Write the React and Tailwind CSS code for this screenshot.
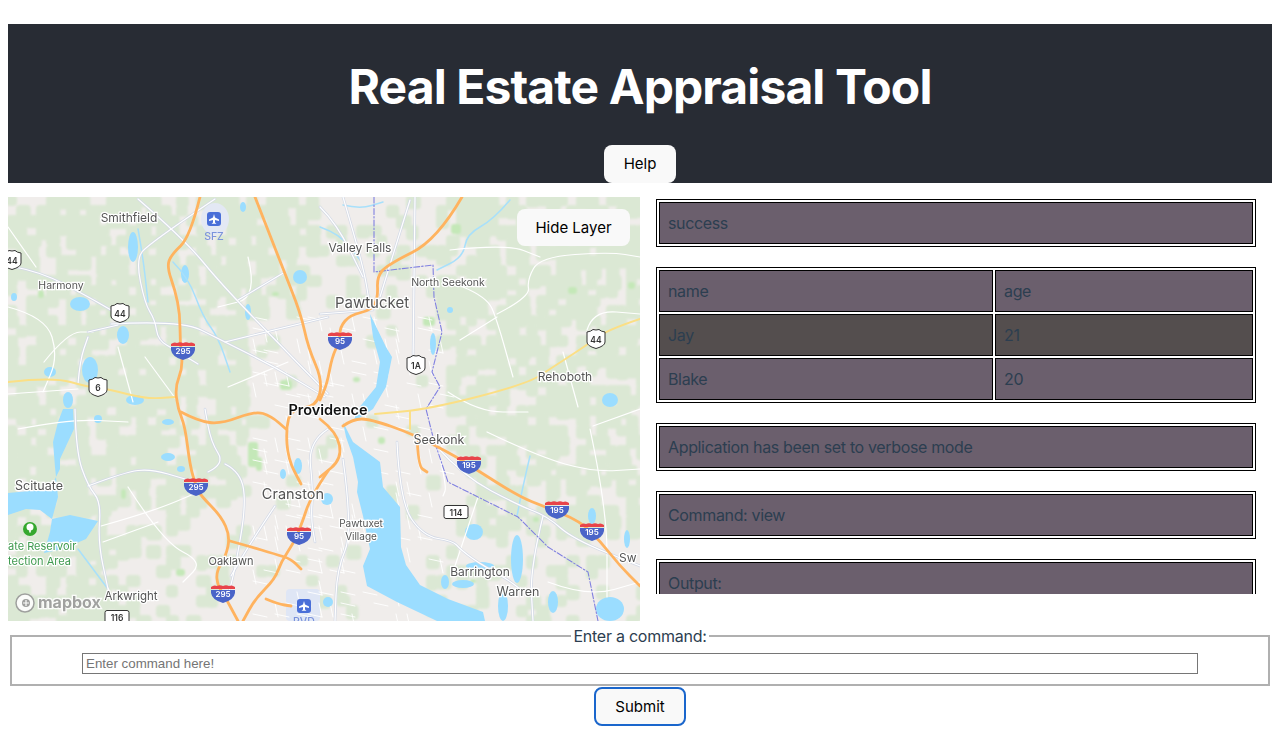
const ROWS = [['name', 'age'], ['Jay', '21'], ['Blake', '20']];
const MESSAGES_AFTER = ['Application has been set to verbose mode', 'Command: view', 'Output:'];

// deterministic noise so the map texture is the same on every render
const noise = (x, y, k = 1) => {
  const n = Math.sin(x * 12.9898 * k + y * 78.233) * 43758.5453;
  return n - Math.floor(n);
};

function greenChance(x, y) {
  if (x > 235 && x < 440 && y > 110) return 0.07;
  if (x > 300 && x < 430) return 0.18;
  if (x > 430 && y > 330) return 0.22;
  if (x > 430) return y > 240 ? 0.55 : 0.72;
  if (y > 300 && x > 90) return 0.3;
  if (y > 270 && x > 90) return 0.42;
  return 0.68;
}

function buildPatches() {
  const cells = [];
  for (let x = 0; x < 632; x += 10) {
    for (let y = 0; y < 424; y += 10) {
      if (noise(x, y) < greenChance(x, y)) {
        cells.push({ x: x - 2, y: y - 2, w: 11 + noise(x, y, 5) * 5, h: 11 + noise(x, y, 7) * 5 });
      }
    }
  }
  return cells;
}

// thin street grid of the urban core
function buildStreets() {
  const streets = [];
  for (let x = 245; x < 440; x += 11) {
    for (let y = 120; y < 420; y += 11) {
      const n = noise(x, y, 2);
      if (n < 0.4) {
        const horizontal = n < 0.2;
        streets.push({ x1: x, y1: y, x2: horizontal ? x + 14 : x + 3, y2: horizontal ? y + 3 : y + 14 });
      }
    }
  }
  return streets;
}

// rounds a polyline's corners so roads run as curves
function smoothPath(points) {
  const p = points.split(' ').map((s) => s.split(',').map(Number));
  if (p.length < 3) return `M${p[0]} L${p[1]}`;
  let d = `M${p[0][0]} ${p[0][1]}`;
  for (let i = 1; i < p.length - 1; i++) {
    const mx = (p[i][0] + p[i + 1][0]) / 2;
    const my = (p[i][1] + p[i + 1][1]) / 2;
    d += ` Q${p[i][0]} ${p[i][1]} ${mx} ${my}`;
  }
  const last = p[p.length - 1];
  return `${d} L${last[0]} ${last[1]}`;
}

const PATCHES = buildPatches();
const STREETS = buildStreets();

const BRIGHT_GREENS = [
  [102, 112, 8, 10], [30, 93, 6, 8], [272, 183, 12, 10], [443, 27, 10, 10], [415, 120, 12, 9], [560, 90, 9, 7],
  [248, 260, 6, 14], [113, 292, 5, 10], [168, 372, 9, 7], [264, 95, 7, 4], [405, 165, 8, 9], [620, 85, 7, 7], [345, 180, 7, 5],
  [525, 320, 6, 5], [462, 382, 6, 4], [370, 240, 7, 7], [240, 245, 10, 25],
];

const LAKES = [
  [125, 50, 5, 15], [177, 77, 4, 9], [72, 107, 10, 7], [115, 138, 6, 9], [82, 173, 8, 13], [42, 175, 6, 5], [60, 203, 5, 8],
  [127, 203, 9, 5], [292, 80, 7, 7], [240, 115, 3, 8], [602, 203, 8, 7], [442, 113, 3, 3], [425, 147, 3, 11],
  [160, 260, 7, 4], [173, 272, 4, 3], [90, 222, 4, 4], [160, 225, 6, 3], [290, 269, 4, 8], [275, 277, 3, 5], [466, 335, 9, 8],
  [509, 362, 6, 24], [495, 409, 5, 15], [602, 412, 14, 12], [584, 319, 4, 8], [320, 405, 5, 5], [472, 369, 14, 4], [455, 387, 11, 4],
  [437, 385, 4, 7], [319, 302, 6, 6], [619, 342, 3, 9], [545, 405, 5, 11], [6, 100, 3, 4], [235, 10, 3, 5],
];

const WATER = [
  '335,225 345,245 372,265 375,290 392,310 393,350 398,368 412,388 440,402 475,415 477,424 429,424 389,405 359,389 355,369 362,352 355,319 349,295 350,285 345,260 338,240',
  '55,212 65,212 66,232 52,262 52,272 42,292 0,296 0,318 18,312 32,313 44,322 62,318 90,324 78,342 55,352 36,356 42,335 44,322 50,300 47,270 45,245 50,225',
  '362,117 378,150 384,160 378,190 365,212 345,225 350,212 368,190 372,165 365,140',
];

const RIVERS = [
  '502,3 485,23 459,37 455,60 429,73', '312,30 332,37 352,63', '522,259 515,289 509,319', '70,352 100,392', '335,8 352,12 375,5',
  '165,65 180,80 195,120 210,140 222,175', '130,32 135,60 140,105',
];

const MAJOR_ROADS = [
  '130,2 177,43 213,87 277,153 320,197', '207,2 140,47 128,63 137,107 147,123 150,143 167,153 190,167',
  '103,127 173,123 213,143 267,170 317,200', '7,70 33,75 77,98 103,113', '80,135 110,128', '70,187 72,163 80,140',
  '217,145 320,120', '230,103 277,75', '67,212 68,255 80,289 93,305 90,345 100,392', '80,289 117,275 143,272 177,282',
  '200,275 217,267 203,245 197,212', '217,267 233,275 238,309 227,372 220,399', '267,309 243,345 223,379', '320,232 300,245 305,292 303,322 307,345',
  '335,262 345,335 329,372 327,424', '389,245 392,305 415,339 445,344 452,352 469,365 499,382 512,392', '429,250 455,279 512,309 539,319 565,342 632,369',
  '535,319 522,372 525,424', '407,0 405,167', '335,0 355,67 362,110', '402,3 372,100', '312,117 365,113', '312,10 329,27 355,80',
];

const MINOR_ROADS = [
  '489,117 522,100 519,83 532,60 602,55 632,60', '579,133 585,113 632,117', '455,90 479,100 489,123 505,180', '452,143 489,120',
  '442,53 499,47 532,60', '479,235 529,259 585,275 632,272', '582,232 599,312 599,400', '585,229 632,212', '93,329 143,315 193,294',
  '429,249 439,289 435,299', '0,30 28,70', '0,110 38,120 50,160 35,195', '0,197 70,192', '36,165 60,135 85,135', '137,160 170,205',
  '110,150 125,205', '220,190 280,165', '240,60 250,100 210,110', '440,195 470,215 520,215', '555,155 570,210', '10,232 60,222 120,225',
  '120,290 155,345 195,365 175,385', '95,345 150,325', '470,300 445,375', '540,385 580,400 632,385',
];

const INTERSTATES = [
  '192,0 182,40 163,58 159,70 167,93 172,117 172,145 175,170 167,190 170,212 177,229 182,269 188,289 193,299 213,319 222,339 218,359 208,375 210,389 215,396 230,424',
  '454,0 429,43 379,68 369,80 370,100 364,113 342,118 332,130 332,143 324,160 319,187 312,203',
  '247,0 273,67 293,117 300,150 315,185 308,210 283,212 278,232 280,262 293,287',
  '173,215 190,224 213,227 247,214 263,219 278,232', '320,274 303,299 293,329 285,347 273,365 267,382 247,402 235,424',
  '222,344 240,349 267,357 283,362 293,372', '258,402 270,407 283,409', '312,222 329,235 334,262 312,280',
  '335,229 345,222 362,222 405,237 449,260 472,275 512,300 535,309 572,324 592,344 612,369 632,389', '409,237 410,269 419,275',
];

const STATE_LINES = ['366,0 366,75 425,68 426,100 434,135 424,175 432,190 418,212 425,240 440,285 510,320 540,350 580,375 590,424'];

const YELLOW_ROADS = ['0,185 45,180 80,190 100,192 138,202 167,200', '632,122 599,133 579,148 545,170 519,187 422,212 367,217', '402,214 402,232'];

const LABELS = [
  ['Smithfield', 121, 25, 12], ['Valley Falls', 352, 55, 12], ['Harmony', 53, 92, 10.5], ['Pawtucket', 364, 111, 15], ['North Seekonk', 440, 89, 10.5],
  ['Rehoboth', 557, 184, 12], ['Seekonk', 431, 247, 12.5], ['Cranston', 285, 302, 14.5], ['Scituate', 31, 293, 12.5], ['Oaklawn', 223, 368, 11],
  ['Arkwright', 123, 403, 11.5], ['Pawtuxet', 353, 330, 10], ['Village', 353, 343, 10], ['Barrington', 472, 379, 12], ['Warren', 510, 399, 12.5],
];

const INTERSTATE_SHIELDS = [[175, 153, '295'], [188, 289, '295'], [215, 396, '295'], [332, 143, '95'], [291, 338, '95'], [461, 267, '195'], [549, 312, '195'], [584, 334, '195']];
const US_SHIELDS = [[112, 116, '44'], [4, 63, '44'], [90, 190, '6'], [408, 168, '1A'], [588, 142, '44']];
const ROUTE_SIGNS = [[109, 420, '116'], [448, 315, '114']];

function InterstateShield({ x, y, label }) {
  return (
    <g transform={`translate(${x} ${y})`}>
      <path d="M-12 -6 Q-9 -8.5 -6 -7 Q-3 -8.5 0 -7 Q3 -8.5 6 -7 Q9 -8.5 12 -6 L12 -4 L-12 -4 Z" fill="#e8444a" />
      <path d="M-12 -3 L12 -3 L12 0 Q11 7 0 10 Q-11 7 -12 0 Z" fill="#4a64c8" />
      <text y="4" textAnchor="middle" fontSize="8" fontWeight="600" fill="#fff">{label}</text>
    </g>
  );
}

function UsShield({ x, y, label }) {
  return (
    <g transform={`translate(${x} ${y})`}>
      <path d="M-9 -7 Q-5 -7.5 -3 -9.5 Q0 -8.5 3 -9.5 Q5 -7.5 9 -7 L9 3 Q9 7 0 9.5 Q-9 7 -9 3 Z" fill="#fff" stroke="#333" strokeWidth="1" />
      <text y="3.5" textAnchor="middle" fontSize="8.5" fontWeight="600" fill="#333">{label}</text>
    </g>
  );
}

function Airport({ x, y, color = '#4a6fd8' }) {
  return (
    <g transform={`translate(${x} ${y})`}>
      <rect x="-7" y="-7" width="14" height="14" rx="3" fill={color} />
      <path d="M0 -5 L1 -1.5 L5 0.5 L5 2 L1 1 L1 3.5 L2.5 4.8 L-2.5 4.8 L-1 3.5 L-1 1 L-5 2 L-5 0.5 L-1 -1.5 Z" fill="#fff" />
    </g>
  );
}

function MapCanvas() {
  return (
    <svg viewBox="0 0 632 424" className="block w-[632px] h-[424px] blur-[0.4px] font-['Inter',sans-serif]">
      <defs>
        <filter id="soft">
          <feGaussianBlur stdDeviation="0.8" />
        </filter>
      </defs>
      <rect width="632" height="424" fill="#f0edeb" />
      <g filter="url(#soft)">
        {PATCHES.map((p, i) => (
          <rect key={i} x={p.x} y={p.y} width={p.w} height={p.h} rx="4" fill="#dbe8d4" />
        ))}
        {BRIGHT_GREENS.map(([x, y, w, h], i) => (
          <rect key={i} x={x} y={y} width={w} height={h} rx="3" fill="#c4e8b8" />
        ))}
      </g>
      <rect x="278" y="392" width="34" height="32" rx="4" fill="#dfe6f5" />
      <ellipse cx="207" cy="22" rx="14" ry="16" fill="#e3e8f4" />
      <g fill="none" strokeLinecap="round">
        {STREETS.map((s, i) => (
          <line key={i} x1={s.x1} y1={s.y1} x2={s.x2} y2={s.y2} stroke="#fff" strokeWidth="0.9" />
        ))}
      </g>
      {WATER.map((points, i) => (
        <polygon key={i} points={points} fill="#9bddff" />
      ))}
      {LAKES.map(([cx, cy, rx, ry], i) => (
        <ellipse key={i} cx={cx} cy={cy} rx={rx} ry={ry} fill="#9bddff" />
      ))}
      <g fill="none" strokeLinecap="round" strokeLinejoin="round">
        {RIVERS.map((points, i) => (
          <path key={i} d={smoothPath(points)} stroke="#a8e0fb" strokeWidth="1.5" />
        ))}
        {MINOR_ROADS.map((points, i) => (
          <path key={i} d={smoothPath(points)} stroke="#fff" strokeWidth="1.2" />
        ))}
        {MAJOR_ROADS.map((points, i) => (
          <path key={i} d={smoothPath(points)} stroke="#d3d9e6" strokeWidth="2.6" />
        ))}
        {MAJOR_ROADS.map((points, i) => (
          <path key={i} d={smoothPath(points)} stroke="#fff" strokeWidth="1.2" />
        ))}
        {STATE_LINES.map((points, i) => (
          <polyline key={i} points={points} stroke="#8080e0" strokeWidth="1.1" strokeDasharray="6 2 1.5 2" />
        ))}
        {YELLOW_ROADS.map((points, i) => (
          <path key={i} d={smoothPath(points)} stroke="#fbdf85" strokeWidth="1.9" />
        ))}
        {INTERSTATES.map((points, i) => (
          <path key={i} d={smoothPath(points)} stroke="#ffb35f" strokeWidth="2.8" />
        ))}
      </g>

      {INTERSTATE_SHIELDS.map(([x, y, label], i) => (
        <InterstateShield key={i} x={x} y={y} label={label} />
      ))}
      {US_SHIELDS.map(([x, y, label], i) => (
        <UsShield key={i} x={x} y={y} label={label} />
      ))}
      {ROUTE_SIGNS.map(([x, y, label], i) => (
        <g key={i} transform={`translate(${x} ${y})`}>
          <rect x="-12" y="-6.5" width="24" height="13" rx="2" fill="#fff" stroke="#333" />
          <text y="3.5" textAnchor="middle" fontSize="8.5" fontWeight="600" fill="#333">{label}</text>
        </g>
      ))}

      <Airport x={206} y={22} />
      <Airport x={296} y={409} />
      <text x="206" y="43" textAnchor="middle" fontSize="10.5" fontWeight="500" fill="#7b93dc">SFZ</text>
      <text x="296" y="428" textAnchor="middle" fontSize="10.5" fontWeight="500" fill="#7b93dc">PVD</text>
      <circle cx="22" cy="332" r="7" fill="#35a82e" />
      <circle cx="22" cy="330" r="3.5" fill="#fff" />
      <rect x="21.2" y="331" width="1.6" height="4.5" fill="#fff" />

      <g stroke="#fff" strokeWidth="2.5" style={{ paintOrder: 'stroke' }}>
        {LABELS.map(([text, x, y, size]) => (
          <text key={text} x={x} y={y} textAnchor="middle" fontSize={size} fill="#555">{text}</text>
        ))}
        <text x="320" y="218" textAnchor="middle" fontSize="14.5" fontWeight="600" fill="#111">Providence</text>
        <text x="0" y="353" fontSize="11" fill="#3f9a4f">ate Reservoir</text>
        <text x="0" y="368" fontSize="11" fill="#3f9a4f">tection Area</text>
        <text x="611" y="365" fontSize="12" fill="#555">Sw</text>
      </g>

      <g opacity="0.9">
        <circle cx="17" cy="406" r="9" fill="#fff" stroke="#999" strokeWidth="1.5" />
        <circle cx="18" cy="406" r="4" fill="#999" />
        <path d="M18 403 L18 409 M15 406 L21 406" stroke="#fff" strokeWidth="1.2" />
        <text x="30" y="411" fontSize="16" fontWeight="700" fill="#9a9a9a" stroke="#fff" strokeWidth="2.5" style={{ paintOrder: 'stroke' }}>mapbox</text>
      </g>
    </svg>
  );
}

function MessageTable({ rows }) {
  return (
    <table className="w-full mb-5 border border-black border-separate border-spacing-[2px] text-base leading-6 tracking-[-0.35px] text-[#2c3e50]">
      <tbody>
        {rows.map((row, i) => (
          <tr key={i} className={i % 2 === 1 ? 'bg-[#544e4e]' : 'bg-[#6b5f6d]'}>
            {row.map((cell, j) => (
              <td key={j} className={`border border-black p-2 font-normal text-left ${row.length > 1 && j === 0 ? 'w-[334px]' : ''}`}>
                {cell}
              </td>
            ))}
          </tr>
        ))}
      </tbody>
    </table>
  );
}

export default function App() {
  return (
    <div className="px-2 pt-6 w-[1280px] h-[736px] overflow-hidden bg-white font-['Inter',sans-serif] text-[#2c3e50]">
      <header className="h-[159px] bg-[#282c34] flex flex-col items-center">
        <h1 className="pt-[33px] text-[48px] leading-[60px] font-bold tracking-[-0.9px] text-white">Real Estate Appraisal Tool</h1>
        <button className="mt-auto w-[72px] h-[38px] pt-px rounded-lg bg-[#f9f9f9] text-[15px] font-normal text-black">Help</button>
      </header>

      <div className="mt-3.5 grid grid-cols-2">
        <div className="relative h-[424px]">
          <MapCanvas />
          <button className="absolute top-3 right-2.5 w-[113px] h-[37px] pt-0.5 rounded-lg bg-[#f9f9f9] text-[15px] font-normal text-black">Hide Layer</button>
        </div>
        <div className="h-[397px] px-4 pt-0.5 overflow-hidden">
          <MessageTable rows={[['success']]} />
          <MessageTable rows={ROWS} />
          {MESSAGES_AFTER.map((m) => (
            <MessageTable key={m} rows={[[m]]} />
          ))}
        </div>
      </div>

      <fieldset className="mt-[3px] mx-0.5 px-3 pb-2.5 pt-[5px] border-2 border-[#b0b0b0] flex flex-col items-center">
        <legend className="mx-auto px-0.5 text-base leading-6 tracking-[-0.25px]">Enter a command:</legend>
        <input
          placeholder="Enter command here!"
          className="w-[1116px] h-[21px] px-[3px] border border-[#767676] font-['Liberation_Sans',sans-serif] text-[13.33px] placeholder:text-[#757575]"
        />
      </fieldset>

      <div className="mt-px flex justify-center">
        <button className="w-[92px] h-[39px] pt-0.5 rounded-lg border-2 border-[#1a66cc] bg-[#f9f9f9] text-[15px] font-normal text-black">Submit</button>
      </div>
    </div>
  );
}
